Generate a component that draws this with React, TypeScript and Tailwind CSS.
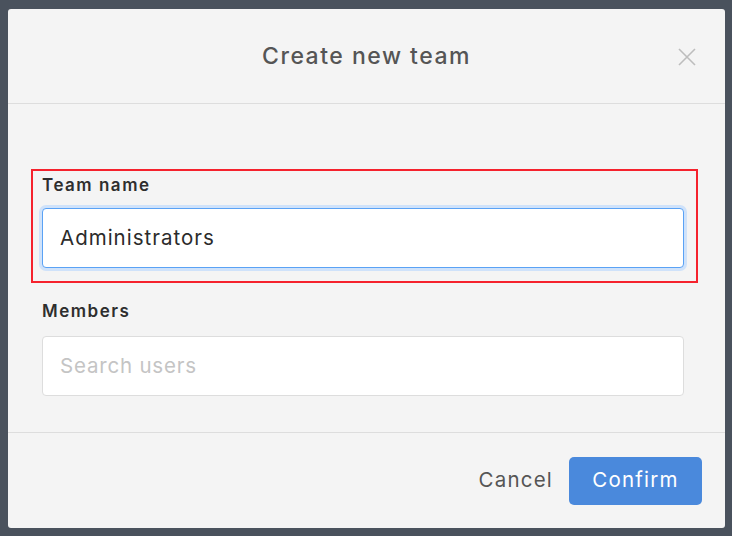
const font = { fontFamily: "Inter, 'Noto Sans', sans-serif" };

export default function App() {
  return (
    <div className="w-[732px] h-[536px] bg-[#4a525d] pt-[9px] pl-[8px]" style={font}>
      <div className="w-[717px] h-[519px] bg-[#f4f4f4] rounded-[3px] flex flex-col">
        <header className="relative h-[95px] shrink-0 flex items-center justify-center border-b border-[#dddddd]">
          <h1 className="text-[23px] font-medium tracking-[1.5px] text-[#555555]">Create new team</h1>
          <button className="absolute left-[670px] top-[39px] text-[#bdbdbd]">
            <svg width="18" height="18" viewBox="0 0 18 18" fill="none" stroke="currentColor" strokeWidth="1.6">
              <path d="M1 1 17 17M17 1 1 17" />
            </svg>
          </button>
        </header>

        <div className="flex-1 pt-[65px] pl-[23px] pr-[27px]">
          <div className="border-2 border-[#f5222d] pt-[2px] pb-[13px] pl-[9px] pr-[12px]">
            <label className="block text-[17px] leading-[24px] font-semibold tracking-[1.5px] text-[#2e2e2e] mb-[11px]">
              Team name
            </label>
            <div className="h-[60px] rounded-[4px] bg-white border border-[#5aa2f5] ring-[3px] ring-[#cfe2fa] flex items-center px-[17px] text-[20.5px] tracking-[1px] text-[#2b2b2b]">
              Administrators
            </div>
          </div>

          <div className="mt-[16px] pl-[11px] pr-[14px]">
            <label className="block text-[17px] leading-[24px] font-semibold tracking-[1.5px] text-[#2e2e2e] mb-[13px]">
              Members
            </label>
            <div className="h-[60px] rounded-[4px] bg-white border border-[#dddddd] flex items-center px-[17px] text-[20.5px] tracking-[0.8px] text-[#c4c4c4]">
              Search users
            </div>
          </div>
        </div>

        <footer className="h-[96px] shrink-0 border-t border-[#dddddd] flex items-center justify-end gap-[16px] pr-[23px]">
          <button className="text-[20.5px] tracking-[1.2px] text-[#555555]">Cancel</button>
          <button className="w-[133px] h-[48px] rounded-[5px] bg-[#4a89dc] text-white text-[20.5px] tracking-[1.2px]">
            Confirm
          </button>
        </footer>
      </div>
    </div>
  );
}
